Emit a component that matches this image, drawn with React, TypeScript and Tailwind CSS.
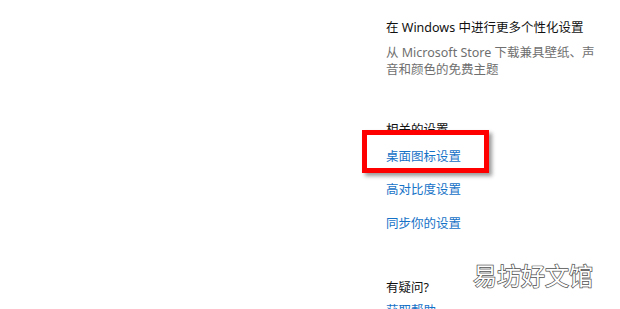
const links = ["高对比度设置", "同步你的设置"];

const App = () => {
  return (
    <div className="relative w-[620px] h-[309px] overflow-hidden bg-white font-['Noto_Sans','Noto_Sans_CJK_SC',sans-serif] text-[12.5px]">
      <div className="flex flex-col pl-[386px] pt-[18px]">
        <div className="leading-[19px] text-[#111]">在 Windows 中进行更多个性化设置</div>
        <div className="mt-[6.5px] w-[212px] leading-[17px] text-[#6f6f6f]">
          从 Microsoft Store 下载兼具壁纸、声音和颜色的免费主题
        </div>
        <div className="mt-[42px] leading-[19px] text-[#111]">相关的设置</div>
        <div className="mt-[8px] leading-[19px] text-[#1672c7]">桌面图标设置</div>
        {links.map((item, index) => (
          <div key={index} className="mt-[14.5px] leading-[19px] text-[#1672c7]">
            {item}
          </div>
        ))}
        <div className="mt-[45px] leading-[19px] text-[#111]">有疑问?</div>
        <div className="mt-[4px] leading-[19px] text-[#1672c7]">获取帮助</div>
      </div>

      {/* red highlight */}
      <div className="absolute left-[362px] top-[130px] w-[127px] h-[43px] border-[5px] border-[#ff0000] shadow-[3px_3px_4px_rgba(0,0,0,0.4)]" />

      {/* watermark */}
      <div className="absolute left-[473px] top-[261px] text-[24px] leading-[27px] text-white [-webkit-text-stroke:1.4px_#5a5a5a] [paint-order:stroke_fill] [text-shadow:0_0_2px_rgba(0,0,0,0.25)] font-['Noto_Sans_CJK_SC',sans-serif]">
        易坊好文馆
      </div>
    </div>
  );
};

export default App;
